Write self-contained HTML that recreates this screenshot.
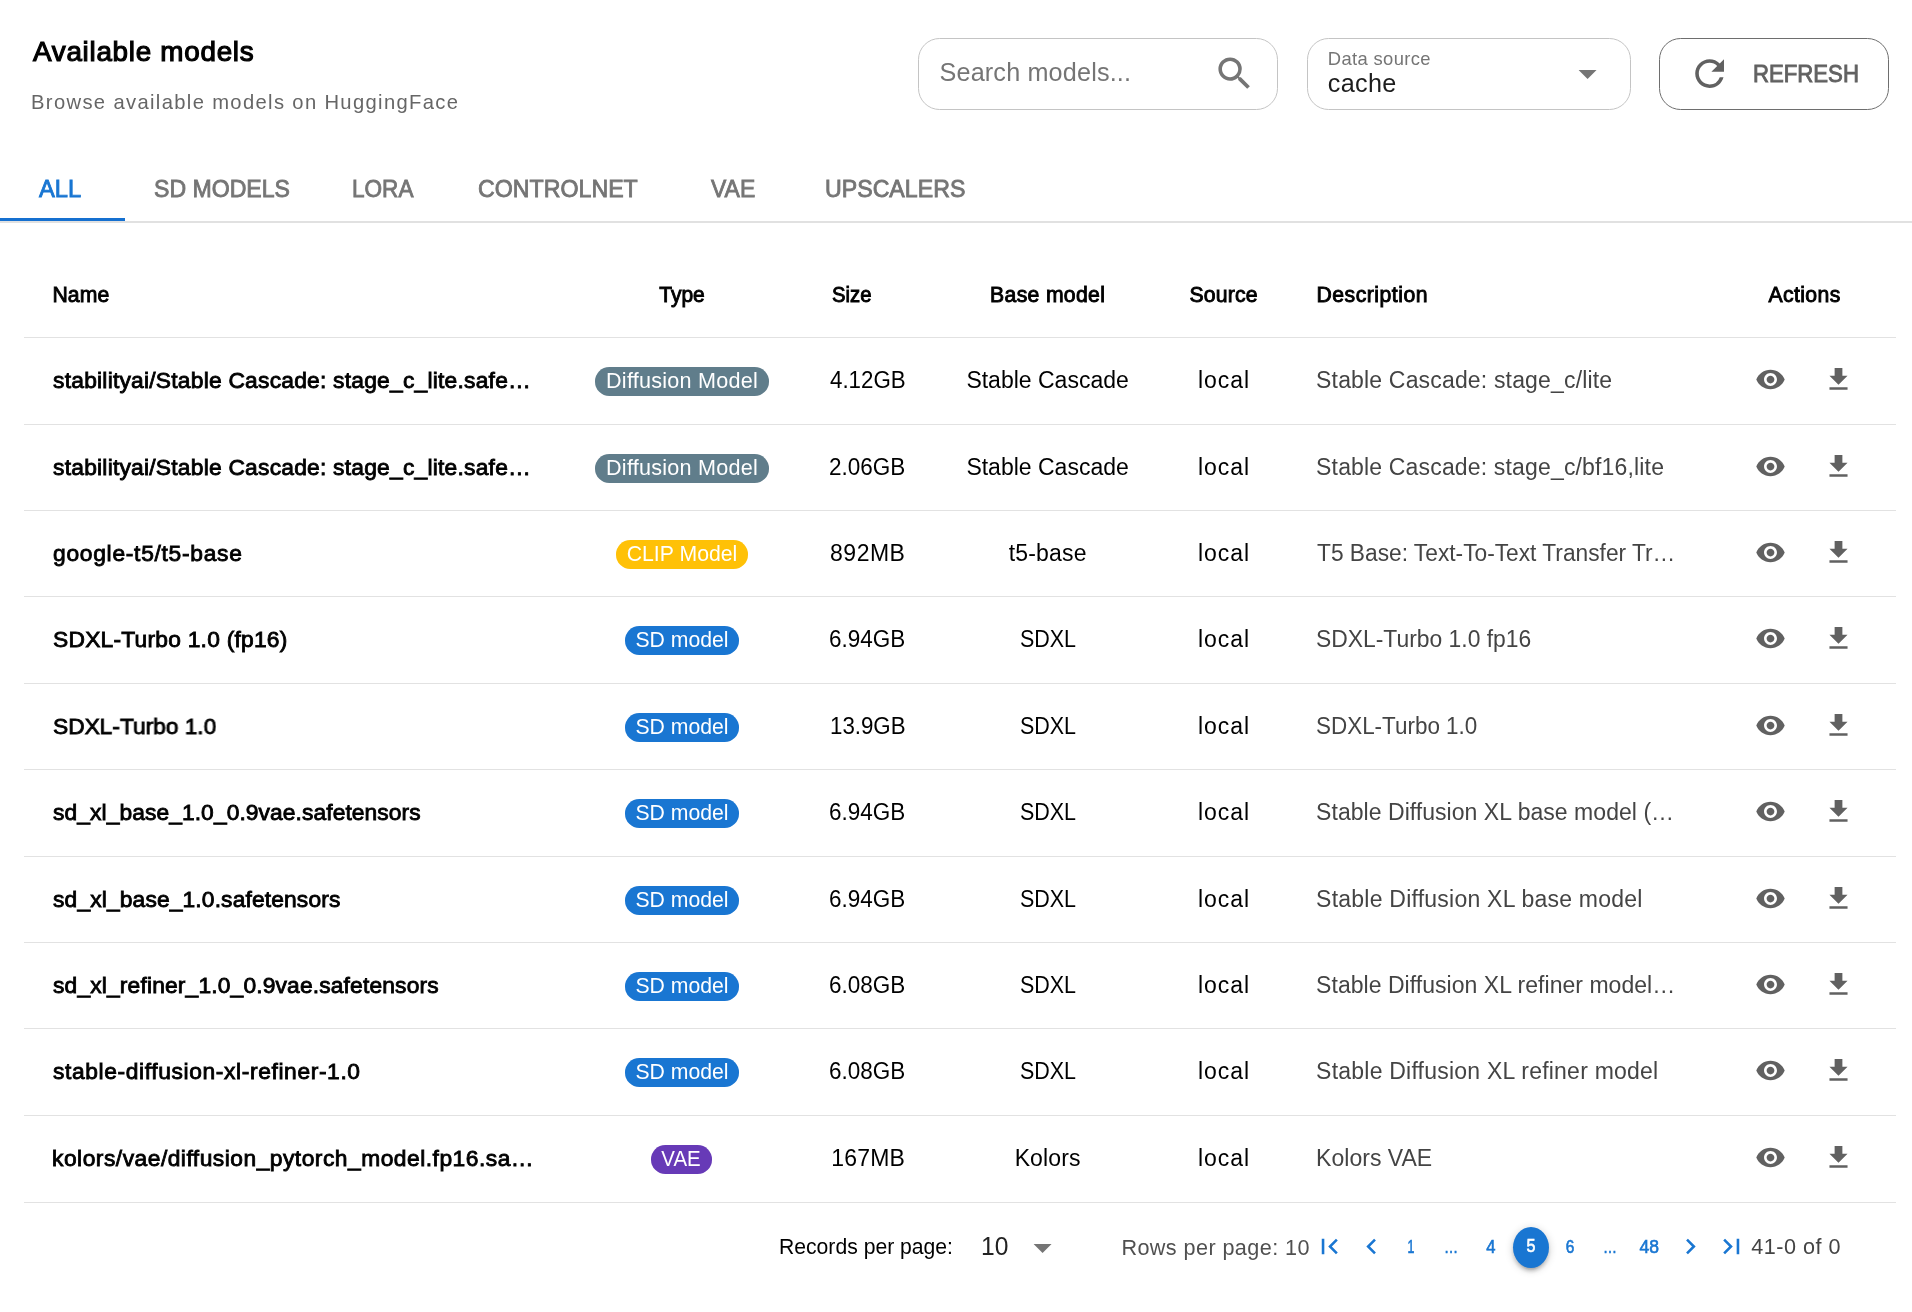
<!DOCTYPE html>
<html lang="en">
<head>
<meta charset="utf-8">
<title>Available models</title>
<style>
html,body{margin:0;padding:0;background:#fff;}
*{box-sizing:border-box;}
body{width:1912px;height:1312px;position:relative;overflow:hidden;font-family:"Liberation Sans", Arial, sans-serif;}
.t{position:absolute;white-space:nowrap;display:block;}
header,nav,main,footer{display:block;position:absolute;left:0;top:0;width:1912px;height:0;will-change:transform;}
.abs{position:absolute;}
svg{position:absolute;display:block;}
button{font-family:inherit;margin:0;padding:0;background:none;}
</style>
</head>
<body>
<header><span id="t1" class="t title" style="top:34.30px;font-size:27.8px;line-height:36px;color:#000;-webkit-text-stroke:1.15px #000;letter-spacing:0.733px;left:33.00px;">Available models</span><span id="t2" class="t" style="top:88.60px;font-size:20.2px;line-height:26px;color:#666;letter-spacing:1.351px;left:31.00px;">Browse available models on HuggingFace</span><div class="field" style="position:absolute;left:918px;top:38px;width:360px;height:72px;border:1px solid #c4c4c4;border-radius:21.6px;"><span id="t3" class="t" style="top:17.10px;font-size:25.2px;line-height:33px;color:#757575;letter-spacing:0.167px;left:20.50px;">Search models...</span><svg style="left:294.20px;top:13.00px" width="43.2" height="43.2" viewBox="0 0 24 24"><path fill="#757575" d="M15.500 14h-.79l-.28-.27A6.471 6.471 0 0 0 16 9.500 6.500 6.500 0 1 0 9.500 16c1.610 0 3.090-.59 4.230-1.570l.27.28v.79l5 4.990L20.490 19l-4.990-5zm-6 0C7.010 14 5 11.990 5 9.500S7.010 5 9.500 5 14 7.010 14 9.500 11.990 14 9.500 14z"/></svg></div><div class="field" style="position:absolute;left:1307px;top:38px;width:324px;height:72px;border:1px solid #c4c4c4;border-radius:21.6px;"><span id="t4" class="t" style="top:7.90px;font-size:18.4px;line-height:24px;color:#757575;letter-spacing:0.350px;left:19.80px;">Data source</span><span id="t5" class="t" style="top:27.80px;font-size:25.2px;line-height:33px;color:#1d1d1d;letter-spacing:0.300px;left:19.80px;">cache</span><svg style="left:258.30px;top:12.80px" width="43.2" height="43.2" viewBox="0 0 24 24"><path fill="#757575" d="M7 10l5 5 5-5z"/></svg></div><button style="position:absolute;left:1659px;top:38px;width:230px;height:72px;border:1px solid #6e6e6e;border-radius:21.6px;"><svg style="left:28.20px;top:12.80px" width="43.2" height="43.2" viewBox="0 0 24 24"><path fill="#616161" d="M17.650 6.350A7.958 7.958 0 0 0 12 4c-4.420 0-7.990 3.580-7.990 8s3.570 8 7.990 8c3.730 0 6.840-2.550 7.730-6h-2.080A5.990 5.990 0 0 1 12 18c-3.310 0-6-2.690-6-6s2.690-6 6-6c1.660 0 3.140.69 4.220 1.780L13 11h7V4l-2.350 2.350z"/></svg><span id="t6" class="t" style="top:19.10px;font-size:24.4px;line-height:32px;color:#616161;-webkit-text-stroke:0.9px #616161;left:93.39px;transform:scaleX(0.9087);transform-origin:0 50%;">REFRESH</span></button></header>
<nav><div style="position:absolute;left:0px;top:221px;width:1912px;height:2px;background:#e1e1e1;"></div><div style="position:absolute;left:0px;top:218px;width:125px;height:3px;background:#1570d0;"></div><span id="t7" class="t" style="top:173.20px;font-size:24.5px;line-height:32px;color:#1976d2;-webkit-text-stroke:0.85px #1976d2;left:38.97px;transform:scaleX(0.9689);transform-origin:0 50%;">ALL</span><span id="t8" class="t" style="top:173.20px;font-size:24.5px;line-height:32px;color:#757575;-webkit-text-stroke:0.85px #757575;left:154.00px;transform:scaleX(0.9424);transform-origin:0 50%;">SD MODELS</span><span id="t9" class="t" style="top:173.20px;font-size:24.5px;line-height:32px;color:#757575;-webkit-text-stroke:0.85px #757575;left:352.08px;transform:scaleX(0.9209);transform-origin:0 50%;">LORA</span><span id="t10" class="t" style="top:173.20px;font-size:24.5px;line-height:32px;color:#757575;-webkit-text-stroke:0.85px #757575;left:478.20px;transform:scaleX(0.9467);transform-origin:0 50%;">CONTROLNET</span><span id="t11" class="t" style="top:173.20px;font-size:24.5px;line-height:32px;color:#757575;-webkit-text-stroke:0.85px #757575;left:711.14px;transform:scaleX(0.9375);transform-origin:0 50%;">VAE</span><span id="t12" class="t" style="top:173.20px;font-size:24.5px;line-height:32px;color:#757575;-webkit-text-stroke:0.85px #757575;left:825.35px;transform:scaleX(0.9456);transform-origin:0 50%;">UPSCALERS</span></nav>
<main><div class="thead"><span id="t13" class="t" style="top:280.70px;font-size:21.2px;line-height:28px;color:#000;-webkit-text-stroke:0.9px #000;letter-spacing:0.067px;left:52.50px;">Name</span><span id="t14" class="t" style="top:280.70px;font-size:21.2px;line-height:28px;color:#000;-webkit-text-stroke:0.9px #000;left:282.10px;width:800px;text-align:center;transform:scaleX(0.9891);transform-origin:50% 50%;">Type</span><span id="t15" class="t" style="top:280.70px;font-size:21.2px;line-height:28px;color:#000;-webkit-text-stroke:0.9px #000;left:831.70px;transform:scaleX(0.9561);transform-origin:0 50%;">Size</span><span id="t16" class="t" style="top:280.70px;font-size:21.2px;line-height:28px;color:#000;-webkit-text-stroke:0.9px #000;letter-spacing:0.333px;left:647.67px;width:800px;text-align:center;">Base model</span><span id="t17" class="t" style="top:280.70px;font-size:21.2px;line-height:28px;color:#000;-webkit-text-stroke:0.9px #000;letter-spacing:0.160px;left:823.58px;width:800px;text-align:center;">Source</span><span id="t18" class="t" style="top:280.70px;font-size:21.2px;line-height:28px;color:#000;-webkit-text-stroke:0.9px #000;letter-spacing:0.520px;left:1316.40px;">Description</span><span id="t19" class="t" style="top:280.70px;font-size:21.2px;line-height:28px;color:#000;-webkit-text-stroke:0.9px #000;letter-spacing:0.367px;left:1404.58px;width:800px;text-align:center;">Actions</span></div>
<div style="position:absolute;left:24px;top:337px;width:1872px;height:1px;background:#e2e2e2;"></div><div class="tr"><span id="t20" class="t" style="top:364.60px;font-size:22.8px;line-height:30px;color:#000;-webkit-text-stroke:0.85px #000;letter-spacing:0.227px;left:53.05px;">stabilityai/Stable Cascade: stage_c_lite.safe…</span><div class="badge" style="position:absolute;left:594.8px;top:367px;width:174.2px;height:28.6px;background:#607d8b;border-radius:14.300px;"><span id="t21" class="t" style="top:0.00px;font-size:21.6px;line-height:28px;color:#fff;letter-spacing:0.236px;left:-312.78px;width:800px;text-align:center;">Diffusion Model</span></div><span id="t22" class="t" style="top:364.60px;font-size:23px;line-height:30px;color:#000;left:830.20px;transform:scaleX(0.9701);transform-origin:0 50%;">4.12GB</span><span id="t23" class="t" style="top:364.60px;font-size:23px;line-height:30px;color:#000;left:647.60px;width:800px;text-align:center;">Stable Cascade</span><span id="t24" class="t" style="top:364.60px;font-size:23px;line-height:30px;color:#000;letter-spacing:0.925px;left:823.96px;width:800px;text-align:center;">local</span><span id="t25" class="t" style="top:364.60px;font-size:23px;line-height:30px;color:#444;letter-spacing:0.167px;left:1316.10px;">Stable Cascade: stage_c/lite</span><svg style="left:1754.85px;top:364.00px" width="31" height="31" viewBox="0 0 24 24"><path fill="#616161" d="M12 4.500C7 4.500 2.730 7.610 1 12c1.730 4.390 6 7.500 11 7.500s9.270-3.110 11-7.500c-1.730-4.390-6-7.500-11-7.500zM12 17c-2.760 0-5-2.240-5-5s2.240-5 5-5 5 2.240 5 5-2.240 5-5 5zm0-8c-1.660 0-3 1.340-3 3s1.340 3 3 3 3-1.340 3-3-1.340-3-3-3z"/></svg><svg style="left:1823.30px;top:364.00px" width="31" height="31" viewBox="0 0 24 24"><path fill="#616161" d="M19 9h-4V3H9v6H5l7 7 7-7zM5 18v2h14v-2H5z"/></svg><div style="position:absolute;left:24px;top:424px;width:1872px;height:1px;background:#e2e2e2;"></div></div>
<div class="tr"><span id="t26" class="t" style="top:451.60px;font-size:22.8px;line-height:30px;color:#000;-webkit-text-stroke:0.85px #000;letter-spacing:0.227px;left:53.05px;">stabilityai/Stable Cascade: stage_c_lite.safe…</span><div class="badge" style="position:absolute;left:594.8px;top:454px;width:174.2px;height:28.6px;background:#607d8b;border-radius:14.300px;"><span id="t27" class="t" style="top:0.00px;font-size:21.6px;line-height:28px;color:#fff;letter-spacing:0.236px;left:-312.78px;width:800px;text-align:center;">Diffusion Model</span></div><span id="t28" class="t" style="top:451.60px;font-size:23px;line-height:30px;color:#000;left:829.42px;transform:scaleX(0.9789);transform-origin:0 50%;">2.06GB</span><span id="t29" class="t" style="top:451.60px;font-size:23px;line-height:30px;color:#000;left:647.60px;width:800px;text-align:center;">Stable Cascade</span><span id="t30" class="t" style="top:451.60px;font-size:23px;line-height:30px;color:#000;letter-spacing:0.925px;left:823.96px;width:800px;text-align:center;">local</span><span id="t31" class="t" style="top:451.60px;font-size:23px;line-height:30px;color:#444;letter-spacing:0.162px;left:1316.10px;">Stable Cascade: stage_c/bf16,lite</span><svg style="left:1754.85px;top:451.00px" width="31" height="31" viewBox="0 0 24 24"><path fill="#616161" d="M12 4.500C7 4.500 2.730 7.610 1 12c1.730 4.390 6 7.500 11 7.500s9.270-3.110 11-7.500c-1.730-4.390-6-7.500-11-7.500zM12 17c-2.760 0-5-2.240-5-5s2.240-5 5-5 5 2.240 5 5-2.240 5-5 5zm0-8c-1.660 0-3 1.340-3 3s1.340 3 3 3 3-1.340 3-3-1.340-3-3-3z"/></svg><svg style="left:1823.30px;top:451.00px" width="31" height="31" viewBox="0 0 24 24"><path fill="#616161" d="M19 9h-4V3H9v6H5l7 7 7-7zM5 18v2h14v-2H5z"/></svg><div style="position:absolute;left:24px;top:510px;width:1872px;height:1px;background:#e2e2e2;"></div></div>
<div class="tr"><span id="t32" class="t" style="top:537.60px;font-size:22.8px;line-height:30px;color:#000;-webkit-text-stroke:0.85px #000;letter-spacing:0.713px;left:53.05px;">google-t5/t5-base</span><div class="badge" style="position:absolute;left:616px;top:540px;width:131.9px;height:28.6px;background:#ffc107;border-radius:14.300px;"><span id="t33" class="t" style="top:0.00px;font-size:21.6px;line-height:28px;color:#fff;left:-334.05px;width:800px;text-align:center;transform:scaleX(0.9838);transform-origin:50% 50%;">CLIP Model</span></div><span id="t34" class="t" style="top:537.60px;font-size:23px;line-height:30px;color:#000;letter-spacing:0.475px;left:830.10px;">892MB</span><span id="t35" class="t" style="top:537.60px;font-size:23px;line-height:30px;color:#000;letter-spacing:0.183px;left:647.69px;width:800px;text-align:center;">t5-base</span><span id="t36" class="t" style="top:537.60px;font-size:23px;line-height:30px;color:#000;letter-spacing:0.925px;left:823.96px;width:800px;text-align:center;">local</span><span id="t37" class="t" style="top:537.60px;font-size:23px;line-height:30px;color:#444;left:1317.10px;transform:scaleX(0.9883);transform-origin:0 50%;">T5 Base: Text-To-Text Transfer Tr…</span><svg style="left:1754.85px;top:537.00px" width="31" height="31" viewBox="0 0 24 24"><path fill="#616161" d="M12 4.500C7 4.500 2.730 7.610 1 12c1.730 4.390 6 7.500 11 7.500s9.270-3.110 11-7.500c-1.730-4.390-6-7.500-11-7.500zM12 17c-2.760 0-5-2.240-5-5s2.240-5 5-5 5 2.240 5 5-2.240 5-5 5zm0-8c-1.660 0-3 1.340-3 3s1.340 3 3 3 3-1.340 3-3-1.340-3-3-3z"/></svg><svg style="left:1823.30px;top:537.00px" width="31" height="31" viewBox="0 0 24 24"><path fill="#616161" d="M19 9h-4V3H9v6H5l7 7 7-7zM5 18v2h14v-2H5z"/></svg><div style="position:absolute;left:24px;top:596px;width:1872px;height:1px;background:#e2e2e2;"></div></div>
<div class="tr"><span id="t38" class="t" style="top:623.60px;font-size:22.8px;line-height:30px;color:#000;-webkit-text-stroke:0.85px #000;letter-spacing:0.225px;left:53.05px;">SDXL-Turbo 1.0 (fp16)</span><div class="badge" style="position:absolute;left:624.5px;top:626px;width:114.5px;height:28.6px;background:#1976d2;border-radius:14.300px;"><span id="t39" class="t" style="top:0.00px;font-size:21.6px;line-height:28px;color:#fff;left:-342.75px;width:800px;text-align:center;transform:scaleX(0.9828);transform-origin:50% 50%;">SD model</span></div><span id="t40" class="t" style="top:623.60px;font-size:23px;line-height:30px;color:#000;left:829.42px;transform:scaleX(0.9776);transform-origin:0 50%;">6.94GB</span><span id="t41" class="t" style="top:623.60px;font-size:23px;line-height:30px;color:#000;left:647.60px;width:800px;text-align:center;transform:scaleX(0.9339);transform-origin:50% 50%;">SDXL</span><span id="t42" class="t" style="top:623.60px;font-size:23px;line-height:30px;color:#000;letter-spacing:0.925px;left:823.96px;width:800px;text-align:center;">local</span><span id="t43" class="t" style="top:623.60px;font-size:23px;line-height:30px;color:#444;left:1316.11px;transform:scaleX(0.9940);transform-origin:0 50%;">SDXL-Turbo 1.0 fp16</span><svg style="left:1754.85px;top:623.00px" width="31" height="31" viewBox="0 0 24 24"><path fill="#616161" d="M12 4.500C7 4.500 2.730 7.610 1 12c1.730 4.390 6 7.500 11 7.500s9.270-3.110 11-7.500c-1.730-4.390-6-7.500-11-7.500zM12 17c-2.760 0-5-2.240-5-5s2.240-5 5-5 5 2.240 5 5-2.240 5-5 5zm0-8c-1.660 0-3 1.340-3 3s1.340 3 3 3 3-1.340 3-3-1.340-3-3-3z"/></svg><svg style="left:1823.30px;top:623.00px" width="31" height="31" viewBox="0 0 24 24"><path fill="#616161" d="M19 9h-4V3H9v6H5l7 7 7-7zM5 18v2h14v-2H5z"/></svg><div style="position:absolute;left:24px;top:683px;width:1872px;height:1px;background:#e2e2e2;"></div></div>
<div class="tr"><span id="t44" class="t" style="top:710.60px;font-size:22.8px;line-height:30px;color:#000;-webkit-text-stroke:0.85px #000;left:53.05px;transform:scaleX(0.9963);transform-origin:0 50%;">SDXL-Turbo 1.0</span><div class="badge" style="position:absolute;left:624.5px;top:713px;width:114.5px;height:28.6px;background:#1976d2;border-radius:14.300px;"><span id="t45" class="t" style="top:0.00px;font-size:21.6px;line-height:28px;color:#fff;left:-342.75px;width:800px;text-align:center;transform:scaleX(0.9828);transform-origin:50% 50%;">SD model</span></div><span id="t46" class="t" style="top:710.60px;font-size:23px;line-height:30px;color:#000;left:830.13px;transform:scaleX(0.9684);transform-origin:0 50%;">13.9GB</span><span id="t47" class="t" style="top:710.60px;font-size:23px;line-height:30px;color:#000;left:647.60px;width:800px;text-align:center;transform:scaleX(0.9339);transform-origin:50% 50%;">SDXL</span><span id="t48" class="t" style="top:710.60px;font-size:23px;line-height:30px;color:#000;letter-spacing:0.925px;left:823.96px;width:800px;text-align:center;">local</span><span id="t49" class="t" style="top:710.60px;font-size:23px;line-height:30px;color:#444;left:1316.12px;transform:scaleX(0.9756);transform-origin:0 50%;">SDXL-Turbo 1.0</span><svg style="left:1754.85px;top:710.00px" width="31" height="31" viewBox="0 0 24 24"><path fill="#616161" d="M12 4.500C7 4.500 2.730 7.610 1 12c1.730 4.390 6 7.500 11 7.500s9.270-3.110 11-7.500c-1.730-4.390-6-7.500-11-7.500zM12 17c-2.760 0-5-2.240-5-5s2.240-5 5-5 5 2.240 5 5-2.240 5-5 5zm0-8c-1.660 0-3 1.340-3 3s1.340 3 3 3 3-1.340 3-3-1.340-3-3-3z"/></svg><svg style="left:1823.30px;top:710.00px" width="31" height="31" viewBox="0 0 24 24"><path fill="#616161" d="M19 9h-4V3H9v6H5l7 7 7-7zM5 18v2h14v-2H5z"/></svg><div style="position:absolute;left:24px;top:769px;width:1872px;height:1px;background:#e2e2e2;"></div></div>
<div class="tr"><span id="t50" class="t" style="top:796.60px;font-size:22.8px;line-height:30px;color:#000;-webkit-text-stroke:0.85px #000;letter-spacing:0.081px;left:53.05px;">sd_xl_base_1.0_0.9vae.safetensors</span><div class="badge" style="position:absolute;left:624.5px;top:799px;width:114.5px;height:28.6px;background:#1976d2;border-radius:14.300px;"><span id="t51" class="t" style="top:0.00px;font-size:21.6px;line-height:28px;color:#fff;left:-342.75px;width:800px;text-align:center;transform:scaleX(0.9828);transform-origin:50% 50%;">SD model</span></div><span id="t52" class="t" style="top:796.60px;font-size:23px;line-height:30px;color:#000;left:829.42px;transform:scaleX(0.9776);transform-origin:0 50%;">6.94GB</span><span id="t53" class="t" style="top:796.60px;font-size:23px;line-height:30px;color:#000;left:647.60px;width:800px;text-align:center;transform:scaleX(0.9339);transform-origin:50% 50%;">SDXL</span><span id="t54" class="t" style="top:796.60px;font-size:23px;line-height:30px;color:#000;letter-spacing:0.925px;left:823.96px;width:800px;text-align:center;">local</span><span id="t55" class="t" style="top:796.60px;font-size:23px;line-height:30px;color:#444;letter-spacing:0.041px;left:1316.10px;">Stable Diffusion XL base model (…</span><svg style="left:1754.85px;top:796.00px" width="31" height="31" viewBox="0 0 24 24"><path fill="#616161" d="M12 4.500C7 4.500 2.730 7.610 1 12c1.730 4.390 6 7.500 11 7.500s9.270-3.110 11-7.500c-1.730-4.390-6-7.500-11-7.500zM12 17c-2.760 0-5-2.240-5-5s2.240-5 5-5 5 2.240 5 5-2.240 5-5 5zm0-8c-1.660 0-3 1.340-3 3s1.340 3 3 3 3-1.340 3-3-1.340-3-3-3z"/></svg><svg style="left:1823.30px;top:796.00px" width="31" height="31" viewBox="0 0 24 24"><path fill="#616161" d="M19 9h-4V3H9v6H5l7 7 7-7zM5 18v2h14v-2H5z"/></svg><div style="position:absolute;left:24px;top:856px;width:1872px;height:1px;background:#e2e2e2;"></div></div>
<div class="tr"><span id="t56" class="t" style="top:883.60px;font-size:22.8px;line-height:30px;color:#000;-webkit-text-stroke:0.85px #000;letter-spacing:0.136px;left:53.05px;">sd_xl_base_1.0.safetensors</span><div class="badge" style="position:absolute;left:624.5px;top:886px;width:114.5px;height:28.6px;background:#1976d2;border-radius:14.300px;"><span id="t57" class="t" style="top:0.00px;font-size:21.6px;line-height:28px;color:#fff;left:-342.75px;width:800px;text-align:center;transform:scaleX(0.9828);transform-origin:50% 50%;">SD model</span></div><span id="t58" class="t" style="top:883.60px;font-size:23px;line-height:30px;color:#000;left:829.42px;transform:scaleX(0.9776);transform-origin:0 50%;">6.94GB</span><span id="t59" class="t" style="top:883.60px;font-size:23px;line-height:30px;color:#000;left:647.60px;width:800px;text-align:center;transform:scaleX(0.9339);transform-origin:50% 50%;">SDXL</span><span id="t60" class="t" style="top:883.60px;font-size:23px;line-height:30px;color:#000;letter-spacing:0.925px;left:823.96px;width:800px;text-align:center;">local</span><span id="t61" class="t" style="top:883.60px;font-size:23px;line-height:30px;color:#444;letter-spacing:0.231px;left:1316.10px;">Stable Diffusion XL base model</span><svg style="left:1754.85px;top:883.00px" width="31" height="31" viewBox="0 0 24 24"><path fill="#616161" d="M12 4.500C7 4.500 2.730 7.610 1 12c1.730 4.390 6 7.500 11 7.500s9.270-3.110 11-7.500c-1.730-4.390-6-7.500-11-7.500zM12 17c-2.760 0-5-2.240-5-5s2.240-5 5-5 5 2.240 5 5-2.240 5-5 5zm0-8c-1.660 0-3 1.340-3 3s1.340 3 3 3 3-1.340 3-3-1.340-3-3-3z"/></svg><svg style="left:1823.30px;top:883.00px" width="31" height="31" viewBox="0 0 24 24"><path fill="#616161" d="M19 9h-4V3H9v6H5l7 7 7-7zM5 18v2h14v-2H5z"/></svg><div style="position:absolute;left:24px;top:942px;width:1872px;height:1px;background:#e2e2e2;"></div></div>
<div class="tr"><span id="t62" class="t" style="top:969.60px;font-size:22.8px;line-height:30px;color:#000;-webkit-text-stroke:0.85px #000;letter-spacing:0.154px;left:53.05px;">sd_xl_refiner_1.0_0.9vae.safetensors</span><div class="badge" style="position:absolute;left:624.5px;top:972px;width:114.5px;height:28.6px;background:#1976d2;border-radius:14.300px;"><span id="t63" class="t" style="top:0.00px;font-size:21.6px;line-height:28px;color:#fff;left:-342.75px;width:800px;text-align:center;transform:scaleX(0.9828);transform-origin:50% 50%;">SD model</span></div><span id="t64" class="t" style="top:969.60px;font-size:23px;line-height:30px;color:#000;left:829.42px;transform:scaleX(0.9776);transform-origin:0 50%;">6.08GB</span><span id="t65" class="t" style="top:969.60px;font-size:23px;line-height:30px;color:#000;left:647.60px;width:800px;text-align:center;transform:scaleX(0.9339);transform-origin:50% 50%;">SDXL</span><span id="t66" class="t" style="top:969.60px;font-size:23px;line-height:30px;color:#000;letter-spacing:0.925px;left:823.96px;width:800px;text-align:center;">local</span><span id="t67" class="t" style="top:969.60px;font-size:23px;line-height:30px;color:#444;letter-spacing:0.036px;left:1316.10px;">Stable Diffusion XL refiner model…</span><svg style="left:1754.85px;top:969.00px" width="31" height="31" viewBox="0 0 24 24"><path fill="#616161" d="M12 4.500C7 4.500 2.730 7.610 1 12c1.730 4.390 6 7.500 11 7.500s9.270-3.110 11-7.500c-1.730-4.390-6-7.500-11-7.500zM12 17c-2.760 0-5-2.240-5-5s2.240-5 5-5 5 2.240 5 5-2.240 5-5 5zm0-8c-1.660 0-3 1.340-3 3s1.340 3 3 3 3-1.340 3-3-1.340-3-3-3z"/></svg><svg style="left:1823.30px;top:969.00px" width="31" height="31" viewBox="0 0 24 24"><path fill="#616161" d="M19 9h-4V3H9v6H5l7 7 7-7zM5 18v2h14v-2H5z"/></svg><div style="position:absolute;left:24px;top:1028px;width:1872px;height:1px;background:#e2e2e2;"></div></div>
<div class="tr"><span id="t68" class="t" style="top:1055.60px;font-size:22.8px;line-height:30px;color:#000;-webkit-text-stroke:0.85px #000;letter-spacing:0.617px;left:53.05px;">stable-diffusion-xl-refiner-1.0</span><div class="badge" style="position:absolute;left:624.5px;top:1058px;width:114.5px;height:28.6px;background:#1976d2;border-radius:14.300px;"><span id="t69" class="t" style="top:-0.00px;font-size:21.6px;line-height:28px;color:#fff;left:-342.75px;width:800px;text-align:center;transform:scaleX(0.9828);transform-origin:50% 50%;">SD model</span></div><span id="t70" class="t" style="top:1055.60px;font-size:23px;line-height:30px;color:#000;left:829.42px;transform:scaleX(0.9776);transform-origin:0 50%;">6.08GB</span><span id="t71" class="t" style="top:1055.60px;font-size:23px;line-height:30px;color:#000;left:647.60px;width:800px;text-align:center;transform:scaleX(0.9339);transform-origin:50% 50%;">SDXL</span><span id="t72" class="t" style="top:1055.60px;font-size:23px;line-height:30px;color:#000;letter-spacing:0.925px;left:823.96px;width:800px;text-align:center;">local</span><span id="t73" class="t" style="top:1055.60px;font-size:23px;line-height:30px;color:#444;letter-spacing:0.222px;left:1316.10px;">Stable Diffusion XL refiner model</span><svg style="left:1754.85px;top:1055.00px" width="31" height="31" viewBox="0 0 24 24"><path fill="#616161" d="M12 4.500C7 4.500 2.730 7.610 1 12c1.730 4.390 6 7.500 11 7.500s9.270-3.110 11-7.500c-1.730-4.390-6-7.500-11-7.500zM12 17c-2.760 0-5-2.240-5-5s2.240-5 5-5 5 2.240 5 5-2.240 5-5 5zm0-8c-1.660 0-3 1.340-3 3s1.340 3 3 3 3-1.340 3-3-1.340-3-3-3z"/></svg><svg style="left:1823.30px;top:1055.00px" width="31" height="31" viewBox="0 0 24 24"><path fill="#616161" d="M19 9h-4V3H9v6H5l7 7 7-7zM5 18v2h14v-2H5z"/></svg><div style="position:absolute;left:24px;top:1115px;width:1872px;height:1px;background:#e2e2e2;"></div></div>
<div class="tr"><span id="t74" class="t" style="top:1142.60px;font-size:22.8px;line-height:30px;color:#000;-webkit-text-stroke:0.85px #000;letter-spacing:0.493px;left:52.05px;">kolors/vae/diffusion_pytorch_model.fp16.sa…</span><div class="badge" style="position:absolute;left:650.8px;top:1145px;width:61.2px;height:28.6px;background:#673ab7;border-radius:14.300px;"><span id="t75" class="t" style="top:-0.00px;font-size:21.6px;line-height:28px;color:#fff;left:-369.40px;width:800px;text-align:center;transform:scaleX(0.9463);transform-origin:50% 50%;">VAE</span></div><span id="t76" class="t" style="top:1142.60px;font-size:23px;line-height:30px;color:#000;letter-spacing:0.200px;left:831.20px;">167MB</span><span id="t77" class="t" style="top:1142.60px;font-size:23px;line-height:30px;color:#000;letter-spacing:0.140px;left:647.67px;width:800px;text-align:center;">Kolors</span><span id="t78" class="t" style="top:1142.60px;font-size:23px;line-height:30px;color:#000;letter-spacing:0.925px;left:823.96px;width:800px;text-align:center;">local</span><span id="t79" class="t" style="top:1142.60px;font-size:23px;line-height:30px;color:#444;letter-spacing:0.022px;left:1316.10px;">Kolors VAE</span><svg style="left:1754.85px;top:1142.00px" width="31" height="31" viewBox="0 0 24 24"><path fill="#616161" d="M12 4.500C7 4.500 2.730 7.610 1 12c1.730 4.390 6 7.500 11 7.500s9.270-3.110 11-7.500c-1.730-4.390-6-7.500-11-7.500zM12 17c-2.760 0-5-2.240-5-5s2.240-5 5-5 5 2.240 5 5-2.240 5-5 5zm0-8c-1.660 0-3 1.340-3 3s1.340 3 3 3 3-1.340 3-3-1.340-3-3-3z"/></svg><svg style="left:1823.30px;top:1142.00px" width="31" height="31" viewBox="0 0 24 24"><path fill="#616161" d="M19 9h-4V3H9v6H5l7 7 7-7zM5 18v2h14v-2H5z"/></svg><div style="position:absolute;left:24px;top:1202px;width:1872px;height:1px;background:#e2e2e2;"></div></div>
</main>
<footer><span id="t80" class="t" style="top:1232.90px;font-size:21.6px;line-height:28px;color:#000;left:779.12px;transform:scaleX(0.9794);transform-origin:0 50%;">Records per page:</span><span id="t81" class="t" style="top:1229.70px;font-size:25.2px;line-height:33px;color:#222;left:981.45px;transform:scaleX(0.9769);transform-origin:0 50%;">10</span><svg style="left:1021.00px;top:1225.90px" width="43.2" height="43.2" viewBox="0 0 24 24"><path fill="#757575" d="M7 10l5 5 5-5z"/></svg><span id="t82" class="t" style="top:1233.70px;font-size:21.6px;line-height:28px;color:#505050;letter-spacing:0.425px;left:1121.40px;">Rows per page: 10</span><svg style="left:1314.40px;top:1231.20px" width="31" height="31" viewBox="0 0 24 24"><path fill="#1976d2" d="M18.410 16.590L13.820 12l4.590-4.590L17 6l-6 6 6 6zM6 6h2v12H6z"/></svg><svg style="left:1355.90px;top:1231.20px" width="31" height="31" viewBox="0 0 24 24"><path fill="#1976d2" d="M15.410 7.410L14 6l-6 6 6 6 1.410-1.410L10.830 12z"/></svg><span id="t83" class="t" style="top:1235.50px;font-size:17.5px;line-height:23px;color:#1976d2;-webkit-text-stroke:0.6px #1976d2;left:1011.40px;width:800px;text-align:center;transform:scaleX(0.7111);transform-origin:50% 50%;">1</span><span id="t84" class="t" style="top:1235.50px;font-size:17.5px;line-height:23px;color:#1976d2;-webkit-text-stroke:0.6px #1976d2;left:1051.20px;width:800px;text-align:center;transform:scaleX(0.8071);transform-origin:50% 50%;">…</span><span id="t85" class="t" style="top:1235.50px;font-size:17.5px;line-height:23px;color:#1976d2;-webkit-text-stroke:0.6px #1976d2;left:1091.20px;width:800px;text-align:center;transform:scaleX(0.9500);transform-origin:50% 50%;">4</span><div style="position:absolute;left:1512.8px;top:1226.9px;width:36.1px;height:41.1px;background:#1976d2;border-radius:50%;box-shadow:0 1.800px 9px rgba(0,0,0,.2),0 3.600px 3.600px rgba(0,0,0,.14),0 5.400px 1.800px -3.600px rgba(0,0,0,.12);"><span id="t86" class="t" style="top:8.60px;font-size:17.5px;line-height:23px;color:#fff;-webkit-text-stroke:0.6px #fff;left:-381.90px;width:800px;text-align:center;transform:scaleX(0.9200);transform-origin:50% 50%;">5</span></div><span id="t87" class="t" style="top:1235.50px;font-size:17.5px;line-height:23px;color:#1976d2;-webkit-text-stroke:0.6px #1976d2;left:1170.10px;width:800px;text-align:center;transform:scaleX(0.8800);transform-origin:50% 50%;">6</span><span id="t88" class="t" style="top:1235.50px;font-size:17.5px;line-height:23px;color:#1976d2;-webkit-text-stroke:0.6px #1976d2;left:1209.90px;width:800px;text-align:center;transform:scaleX(0.8000);transform-origin:50% 50%;">…</span><span id="t89" class="t" style="top:1235.50px;font-size:17.5px;line-height:23px;color:#1976d2;-webkit-text-stroke:0.6px #1976d2;left:1249.30px;width:800px;text-align:center;">48</span><svg style="left:1674.90px;top:1231.20px" width="31" height="31" viewBox="0 0 24 24"><path fill="#1976d2" d="M10 6L8.590 7.410 13.170 12l-4.580 4.590L10 18l6-6z"/></svg><svg style="left:1716.30px;top:1231.20px" width="31" height="31" viewBox="0 0 24 24"><path fill="#1976d2" d="M5.590 7.410L10.180 12l-4.590 4.590L7 18l6-6-6-6zM16 6h2v12h-2z"/></svg><span id="t90" class="t" style="top:1232.90px;font-size:21.6px;line-height:28px;color:#444;letter-spacing:0.500px;left:1751.30px;">41-0 of 0</span></footer>
</body>
</html>
